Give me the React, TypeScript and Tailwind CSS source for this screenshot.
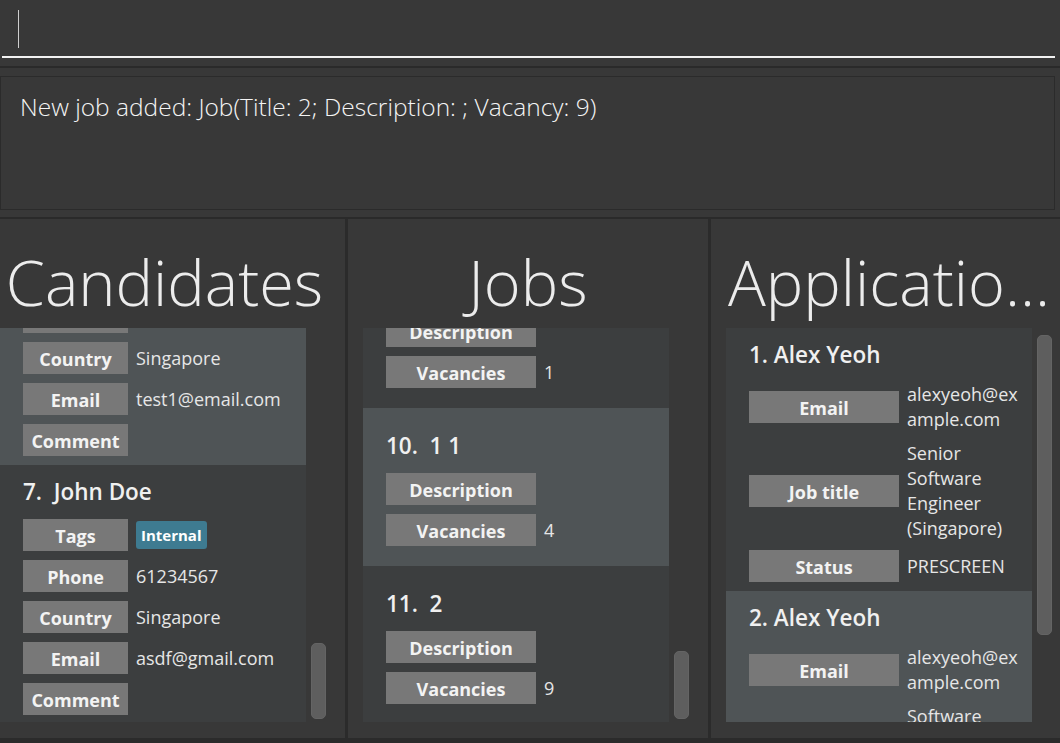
import React from 'react';

type Field = { label: string; value?: React.ReactNode; tag?: string };

const font = { fontFamily: '"Open Sans", "Noto Sans", sans-serif' };

function Row({ field, labelW }: { field: Field; labelW: string }) {
  return (
    <div className="flex items-center gap-2">
      <div
        className={`${labelW} h-[32px] shrink-0 bg-[#787878] flex items-center justify-center pt-[3px] text-[18px] font-bold text-[#f3f3f3]`}
      >
        {field.label}
      </div>
      {field.tag ? (
        <span className="rounded-[3px] bg-[#3e7b91] px-[5px] h-[28px] flex items-center text-[15px] font-bold text-white">
          {field.tag}
        </span>
      ) : (
        <div className="text-[18px] leading-[25px] text-[#e6e6e6]">{field.value}</div>
      )}
    </div>
  );
}

function Card({
  title,
  fields,
  light,
  labelW,
  className = '',
  children,
}: {
  title?: string;
  fields: Field[];
  light?: boolean;
  labelW: string;
  className?: string;
  children?: React.ReactNode;
}) {
  return (
    <div className={`${light ? 'bg-[#4f5456]' : 'bg-[#3c3e3f]'} pl-[23px] pr-2 shrink-0 ${className}`}>
      {title && (
        <div className="h-[26px] mb-[14px] flex items-center text-[22.5px] font-semibold text-[#f0f0f0] whitespace-pre">
          {title}
        </div>
      )}
      <div className="flex flex-col gap-[9px]">
        {children}
        {fields.map((f, i) => (
          <Row key={i} field={f} labelW={labelW} />
        ))}
      </div>
    </div>
  );
}

function Scroll({ top, height }: { top: string; height: string }) {
  return (
    <div className="w-[22px] shrink-0 relative">
      <div className={`absolute left-[5px] ${top} ${height} w-[15px] rounded-[5px] bg-[#5e5e5e] border border-[#646464]`} />
    </div>
  );
}

export default function App() {
  return (
    <div className="w-[1060px] h-[743px] bg-[#323232] flex flex-col overflow-hidden" style={font}>
      {/* command box */}
      <div className="h-[66px] bg-[#383838] pt-[10px] pl-[2px] pr-[5px] shrink-0">
        <div className="h-[48px] pl-[16px] border-b-2 border-[#f2f2f2]">
          <div className="w-px h-[38px] bg-[#cfcfcf]" />
        </div>
      </div>
      <div className="h-[2px] bg-[#2a2a2a] shrink-0" />
      {/* result display */}
      <div className="h-[149px] bg-[#383838] pt-[8px] pb-[7px] pr-[5px] shrink-0">
        <div className="h-full border border-[#2b2b2b] bg-[#383838] pl-[19px] pt-[12px]">
          <div className="text-[24.5px] font-light text-[#f4f4f4]">
            New job added: Job(Title: 2; Description: ; Vacancy: 9)
          </div>
        </div>
      </div>
      <div className="h-[2px] bg-[#2a2a2a] shrink-0" />
      {/* panels */}
      <div className="flex flex-1 min-h-0 bg-[#2b2b2b] pb-[5px]">
        {/* Candidates */}
        <div className="w-[345px] shrink-0 bg-[#383838] flex flex-col">
          <div className="h-[109px] pr-[16px] pt-[16px] flex items-center justify-center text-[63px] font-light text-[#ececec] leading-none">
            Candidates
          </div>
          <div className="flex h-[394px]">
            <div className="w-[306px] flex flex-col overflow-hidden">
              <Card
                light
                labelW="w-[105px]"
                className="pb-[9px]"
                fields={[
                  { label: 'Country', value: 'Singapore' },
                  { label: 'Email', value: 'test1@email.com' },
                  { label: 'Comment', value: '' },
                ]}
              >
                <div className="w-[105px] h-[5px] bg-[#787878]" />
              </Card>
              <Card
                labelW="w-[105px]"
                className="pt-[14px] pb-[9px]"
                title="7.  John Doe"
                fields={[
                  { label: 'Tags', tag: 'Internal' },
                  { label: 'Phone', value: '61234567' },
                  { label: 'Country', value: 'Singapore' },
                  { label: 'Email', value: 'asdf@gmail.com' },
                  { label: 'Comment', value: '' },
                ]}
              />
            </div>
            <Scroll top="top-[315px]" height="h-[76px]" />
          </div>
        </div>
        <div className="w-[3px] shrink-0 bg-[#2b2b2b]" />
        {/* Jobs */}
        <div className="w-[360px] shrink-0 bg-[#383838] flex flex-col">
          <div className="h-[109px] pt-[16px] flex items-center justify-center text-[63px] font-light text-[#ececec] leading-none">
            Jobs
          </div>
          <div className="flex h-[394px] pl-[15px]">
            <div className="w-[306px] flex flex-col overflow-hidden">
              <Card
                labelW="w-[150px]"
                className="mt-[-13px] pb-[20px]"
                fields={[
                  { label: 'Description', value: '' },
                  { label: 'Vacancies', value: '1' },
                ]}
              />
              <Card
                light
                labelW="w-[150px]"
                className="pt-[25px] pb-[20px]"
                title="10.  1 1"
                fields={[
                  { label: 'Description', value: '' },
                  { label: 'Vacancies', value: '4' },
                ]}
              />
              <Card
                labelW="w-[150px]"
                className="pt-[25px] pb-[20px]"
                title="11.  2"
                fields={[
                  { label: 'Description', value: '' },
                  { label: 'Vacancies', value: '9' },
                ]}
              />
            </div>
            <Scroll top="top-[323px]" height="h-[68px]" />
          </div>
        </div>
        <div className="w-[3px] shrink-0 bg-[#2b2b2b]" />
        {/* Applications */}
        <div className="flex-1 min-w-0 bg-[#383838] flex flex-col">
          <div className="h-[109px] pl-[17px] pt-[16px] flex items-center text-[63px] font-light text-[#ececec] leading-none whitespace-nowrap overflow-hidden">
            Applicatio...
          </div>
          <div className="flex h-[394px] pl-[15px]">
            <div className="w-[306px] flex flex-col overflow-hidden">
              <Card
                labelW="w-[150px]"
                className="pt-[14px] pb-[9px]"
                title="1. Alex Yeoh"
                fields={[
                  { label: 'Email', value: <>alexyeoh@ex<br />ample.com</> },
                  { label: 'Job title', value: <>Senior<br />Software<br />Engineer<br />(Singapore)</> },
                  { label: 'Status', value: 'PRESCREEN' },
                ]}
              />
              <Card
                light
                labelW="w-[150px]"
                className="pt-[14px] pb-[9px]"
                title="2. Alex Yeoh"
                fields={[
                  { label: 'Email', value: <>alexyeoh@ex<br />ample.com</> },
                  { label: 'Job title', value: <>Software<br />Engineer<br />(Singapore)</> },
                ]}
              />
            </div>
            <Scroll top="top-[7px]" height="h-[300px]" />
          </div>
        </div>
      </div>
    </div>
  );
}
